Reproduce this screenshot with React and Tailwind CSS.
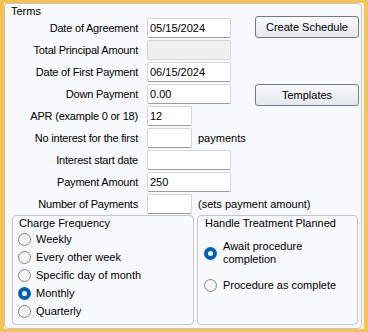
import React from 'react';

const rows = [
  { label: 'Date of Agreement', value: '05/15/2024', button: 'Create Schedule', buttonShift: '-mt-[2px]' },
  { label: 'Total Principal Amount', disabled: true },
  { label: 'Date of First Payment', value: '06/15/2024' },
  { label: 'Down Payment', value: '0.00', button: 'Templates', buttonShift: 'mt-0' },
  { label: 'APR (example 0 or 18)', value: '12', short: true },
  { label: 'No interest for the first', short: true, after: 'payments' },
  { label: 'Interest start date' },
  { label: 'Payment Amount', value: '250' },
  { label: 'Number of Payments', short: true, after: '(sets payment amount)' },
];

function TextBox({ value, short, disabled }) {
  return (
    <div
      className={`ml-[7px] h-[20px] shrink-0 rounded-[2px] border border-[#d6d6d6] border-b-[#9c9c9c] pl-[2px] leading-[18px] ${
        short ? 'w-[45px]' : 'w-[84px]'
      } ${disabled ? 'bg-[#f0f0f0] border-b-[#d6d6d6]' : 'bg-white'}`}
    >
      {value}
    </div>
  );
}

function Radio({ checked }) {
  if (checked) {
    return (
      <span className="flex h-[13px] w-[13px] shrink-0 items-center justify-center rounded-full bg-[#005fb8]">
        <span className="h-[5px] w-[5px] rounded-full bg-white" />
      </span>
    );
  }
  return <span className="h-[13px] w-[13px] shrink-0 rounded-full border border-[#858585] bg-[#f4f4f4]" />;
}

const frequencies = ['Weekly', 'Every other week', 'Specific day of month', 'Monthly', 'Quarterly'];

export default function App() {
  return (
    <div className="h-[332px] w-[368px] bg-[#f8c24f] pb-[3px] pl-[4px] pr-[4px] pt-[3px] font-['Liberation_Sans',Arial,sans-serif] text-[11px] text-black">
      <div className="h-full bg-[#f8f9fc] pr-[2px]">
        <div className="h-full rounded-[4px] border border-[#c6c6c8]">
          {/* Terms */}
          <div className="h-[14px] pl-[6px] leading-[14px]">Terms</div>

          <div className="flex flex-col gap-[2px]">
            {rows.map((row) => (
              <div key={row.label} className="flex h-[20px] items-center">
                <div className="w-[135px] shrink-0 pr-[2px] text-right leading-[14px] tracking-[-0.2px]">{row.label}</div>
                <TextBox value={row.value} short={row.short} disabled={row.disabled} />
                {row.after && <span className="ml-[6px] whitespace-nowrap leading-[14px]">{row.after}</span>}
                {row.button && (
                  <button
                    className={`ml-auto mr-[2px] h-[22px] w-[104px] self-start rounded-[3px] border border-[#707c8c] bg-gradient-to-b from-[#f8f9fb] to-[#e5e8ed] text-[11px] leading-[20px] ${row.buttonShift}`}
                  >
                    {row.button}
                  </button>
                )}
              </div>
            ))}
          </div>

          {/* Group boxes */}
          <div className="ml-[7px] mt-[1px] flex gap-[3px]">
            <div className="h-[110px] w-[182px] rounded-[4px] border border-[#c6c6c8]">
              <div className="h-[14px] pl-[6px] leading-[14px]">Charge Frequency</div>
              <div className="flex flex-col">
                {frequencies.map((f) => (
                  <div key={f} className="flex h-[18px] items-center gap-[5px] pl-[5px]">
                    <Radio checked={f === 'Monthly'} />
                    <span className="leading-[14px]">{f}</span>
                  </div>
                ))}
              </div>
            </div>

            <div className="h-[110px] w-[161px] rounded-[4px] border border-[#c6c6c8]">
              <div className="h-[14px] pl-[7px] leading-[14px]">Handle Treatment Planned</div>
              <div className="mt-[10px] flex items-center gap-[6px] pl-[6px]">
                <Radio checked />
                <span className="leading-[13px]">
                  Await procedure
                  <br />
                  completion
                </span>
              </div>
              <div className="mt-[12px] flex h-[14px] items-center gap-[6px] pl-[6px]">
                <Radio />
                <span className="leading-[14px]">Procedure as complete</span>
              </div>
            </div>
          </div>
        </div>
      </div>
    </div>
  );
}
